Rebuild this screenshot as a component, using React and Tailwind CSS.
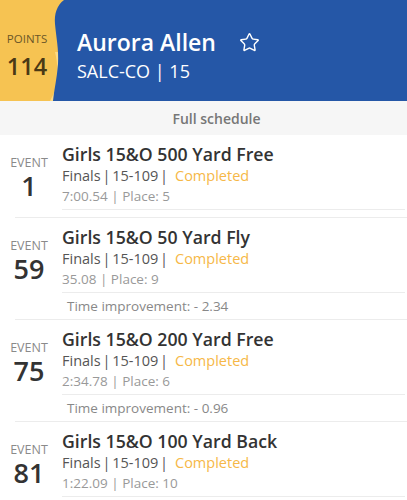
import { Star } from 'lucide-react';

const events = [
  { num: '1', title: 'Girls 15&O 500 Yard Free', time: '7:00.54', place: '5' },
  { num: '59', title: 'Girls 15&O 50 Yard Fly', time: '35.08', place: '9', improvement: '- 2.34' },
  { num: '75', title: 'Girls 15&O 200 Yard Free', time: '2:34.78', place: '6', improvement: '- 0.96' },
  { num: '81', title: 'Girls 15&O 100 Yard Back', time: '1:22.09', place: '10' },
];

const EventRow = ({ ev }) => (
  <div className="flex flex-col">
    <div className="flex pt-[8px]">
      {/* Event number */}
      <div className="w-[58px] shrink-0 flex flex-col items-center pt-[14px]">
        <span className="text-[12.5px] leading-[12px] text-[#8a8a8a]">EVENT</span>
        <span className="mt-[2px] text-[27px] leading-[30px] font-semibold text-[#333]">{ev.num}</span>
      </div>
      {/* Details */}
      <div className="ml-[4px] flex-1 flex flex-col">
        <div className="text-[17.7px] leading-[22px] font-semibold text-[#333]">{ev.title}</div>
        <div className="text-[14.5px] leading-[21px] text-[#555]">
          <span className="[word-spacing:-2px]">Finals | 15-109 |</span>
          <span className="ml-[7px] text-[#f6b847]">Completed</span>
        </div>
        <div className="text-[13.5px] leading-[21px] text-[#999]">
          {ev.time} | Place: {ev.place}
        </div>
        <div className="mt-[2px] mr-[2px] h-[1px] bg-[#ececec]" />
      </div>
    </div>
    {ev.improvement ? (
      <>
        <div className="pl-[67px] pt-[3px] text-[13.5px] leading-[20px] text-[#888]">
          Time improvement: {ev.improvement}
        </div>
        <div className="mt-[3px] ml-[15px] h-[1px] bg-[#ececec]" />
      </>
    ) : (
      <div className="mt-[7px] ml-[15px] h-[1px] bg-[#ececec]" />
    )}
  </div>
);

export default function App() {
  return (
    <div className="w-[407px] h-[500px] overflow-hidden bg-white font-['Open_Sans',sans-serif]">
      {/* Header */}
      <div className="relative h-[101px] bg-[#f6c352] flex">
        <svg className="absolute inset-0" width="407" height="101" viewBox="0 0 407 101">
          <path d="M55 52 C58 64 58 76 56 86 C55 92 52 97 50 101 L60 101 L60 52 Z" fill="#fcda86" />
          <path d="M64 0 C57 5 54 14 55 24 C56 36 59 50 58 64 C57 78 54 90 53 101 L407 101 L407 0 Z" fill="#2557a7" />
        </svg>
        <div className="relative w-[54px] flex flex-col items-center pt-[32px]">
          <span className="text-[11.5px] leading-[14px] text-[#6b5628]">POINTS</span>
          <span className="mt-[6px] text-[23.5px] leading-[28px] font-semibold text-[#4a3915]">114</span>
        </div>
        <div className="relative pl-[23px] pt-[27px] flex flex-col">
          <div className="flex items-center">
            <span className="text-[23px] leading-[30px] font-semibold text-white">Aurora Allen</span>
            <Star className="ml-[23px] text-white" size={21} strokeWidth={1.6} />
          </div>
          <span className="mt-[3px] text-[18px] leading-[22px] text-white">SALC-CO | 15</span>
        </div>
      </div>
      {/* Full schedule */}
      <div className="h-[34px] bg-[#f6f6f6] flex items-center justify-center pl-[26px]">
        <span className="text-[14px] font-semibold text-[#777]">Full schedule</span>
      </div>
      {events.map((ev) => (
        <EventRow key={ev.num} ev={ev} />
      ))}
    </div>
  );
}
